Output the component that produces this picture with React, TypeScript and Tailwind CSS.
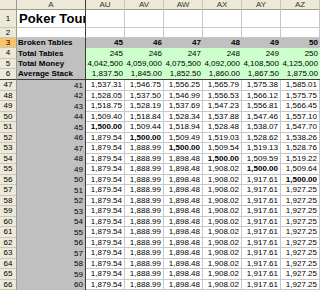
import React from 'react';

const COLS = ['AU', 'AV', 'AW', 'AX', 'AY', 'AZ'];

const BROKEN = ['45', '46', '47', '48', '49', '50'];
const TOTAL = ['245', '246', '247', '248', '249', '250'];
const MONEY = ['4,042,500', '4,059,000', '4,075,500', '4,092,000', '4,108,500', '4,125,000'];
const AVG = ['1,837.50', '1,845.00', '1,852.50', '1,860.00', '1,867.50', '1,875.00'];

const TAIL = ['1,879.54', '1,888.99', '1,898.48', '1,908.02', '1,917.61', '1,927.25'];

const STACKS: string[][] = [
  ['1,537.31', '1,546.75', '1,556.25', '1,565.79', '1,575.38', '1,585.01'],
  ['1,528.05', '1,537.50', '1,546.99', '1,556.53', '1,566.12', '1,575.75'],
  ['1,518.75', '1,528.19', '1,537.69', '1,547.23', '1,556.81', '1,566.45'],
  ['1,509.40', '1,518.84', '1,528.34', '1,537.88', '1,547.46', '1,557.10'],
  ['1,500.00', '1,509.44', '1,518.94', '1,528.48', '1,538.07', '1,547.70'],
  ['1,879.54', '1,500.00', '1,509.49', '1,519.03', '1,528.62', '1,538.26'],
  ['1,879.54', '1,888.99', '1,500.00', '1,509.54', '1,519.13', '1,528.76'],
  ['1,879.54', '1,888.99', '1,898.48', '1,500.00', '1,509.59', '1,519.22'],
  ['1,879.54', '1,888.99', '1,898.48', '1,908.02', '1,500.00', '1,509.64'],
  ['1,879.54', '1,888.99', '1,898.48', '1,908.02', '1,917.61', '1,500.00'],
  ...Array.from({ length: 10 }, () => TAIL),
];

const rowCls = 'grid grid-cols-[17px_69px_39px_39px_39px_39px_39px_39px]';

function RowHead({ n, active, freeze }: { n: string; active?: boolean; freeze?: boolean }) {
  return (
    <div
      className={`flex items-center justify-center border-r border-r-[#9d9a89] ${
        freeze ? 'border-b border-b-[#3c3c3c]' : 'border-b border-b-[#cbc7b8]'
      } ${active ? 'bg-[#f9c26c]' : 'bg-[#ece9d8]'}`}
    >
      {n}
    </div>
  );
}

export default function App() {
  return (
    <div className="w-[320px] h-[290px] overflow-hidden bg-white text-[8px] leading-none text-black font-['Liberation_Sans',Arial,sans-serif]">
      {/* column headers */}
      <div className={`${rowCls} h-[10px]`}>
        <div className="bg-[#ece9d8] border-r border-r-[#9d9a89] border-b border-b-[#9d9a89]" />
        <div className="flex items-center justify-center bg-[#ece9d8] border-r border-r-[#3c3c3c] border-b border-b-[#9d9a89] text-[#333]">
          A
        </div>
        {COLS.map((c) => (
          <div
            key={c}
            className="flex items-center justify-center bg-[#ece9d8] border-r border-r-[#cbc7b8] border-b border-b-[#9d9a89] text-[#333]"
          >
            {c}
          </div>
        ))}
      </div>

      {/* title row */}
      <div className={`${rowCls} h-[18px]`}>
        <RowHead n="1" />
        <div className="flex items-end pl-[2px] pb-[2px] overflow-hidden whitespace-nowrap border-r border-r-[#3c3c3c] border-b border-b-[#c8c8c8] text-[13px] tracking-[0.1px] font-bold">
          Poker Tour
        </div>
        {COLS.map((c) => (
          <div key={c} className="border-r border-b border-[#c8c8c8]" />
        ))}
      </div>

      <div className={`${rowCls} h-[10px]`}>
        <RowHead n="2" />
        <div className="border-r border-r-[#3c3c3c] border-b border-b-[#c8c8c8]" />
        {COLS.map((c) => (
          <div key={c} className="border-r border-b border-[#c8c8c8]" />
        ))}
      </div>

      {/* summary rows */}
      {[
        { n: '3', label: 'Broken Tables', vals: BROKEN, h: 'h-[10px]', gray: true },
        { n: '4', label: 'Total Tables', vals: TOTAL, h: 'h-[11px]' },
        { n: '5', label: 'Total Money', vals: MONEY, h: 'h-[10px]' },
        { n: '6', label: 'Average Stack', vals: AVG, h: 'h-[11px]', last: true },
      ].map((r) => (
        <div key={r.n} className={`${rowCls} ${r.h}`}>
          <RowHead n={r.n} active={r.n === '3'} freeze={r.last} />
          <div
            className={`flex items-center pl-[1px] font-bold bg-[#c0c0c0] border-r border-r-[#3c3c3c] ${
              r.last ? 'border-b border-b-[#3c3c3c]' : ''
            }`}
          >
            {r.label}
          </div>
          {r.vals.map((v, i) => (
            <div
              key={i}
              className={`flex items-center justify-end pr-[2px] ${
                r.gray ? 'bg-[#c0c0c0] font-bold' : 'bg-[#ccffcc]'
              } ${r.last ? 'border-b border-b-[#3c3c3c]' : ''}`}
            >
              {v}
            </div>
          ))}
        </div>
      ))}

      {/* stack table */}
      {STACKS.map((vals, idx) => (
        <div key={idx} className={`${rowCls} ${idx % 2 === 0 ? 'h-[11px]' : 'h-[10px]'}`}>
          <RowHead n={String(47 + idx)} />
          <div className="flex items-center justify-end pr-[2px] bg-[#c0c0c0] border-r border-r-[#3c3c3c]">
            {41 + idx}
          </div>
          {vals.map((v, i) => (
            <div
              key={i}
              className={`flex items-center justify-end pr-[2px] border-r border-b border-[#c8c8c8] ${
                v === '1,500.00' ? 'font-bold' : ''
              }`}
            >
              {v}
            </div>
          ))}
        </div>
      ))}
    </div>
  );
}
